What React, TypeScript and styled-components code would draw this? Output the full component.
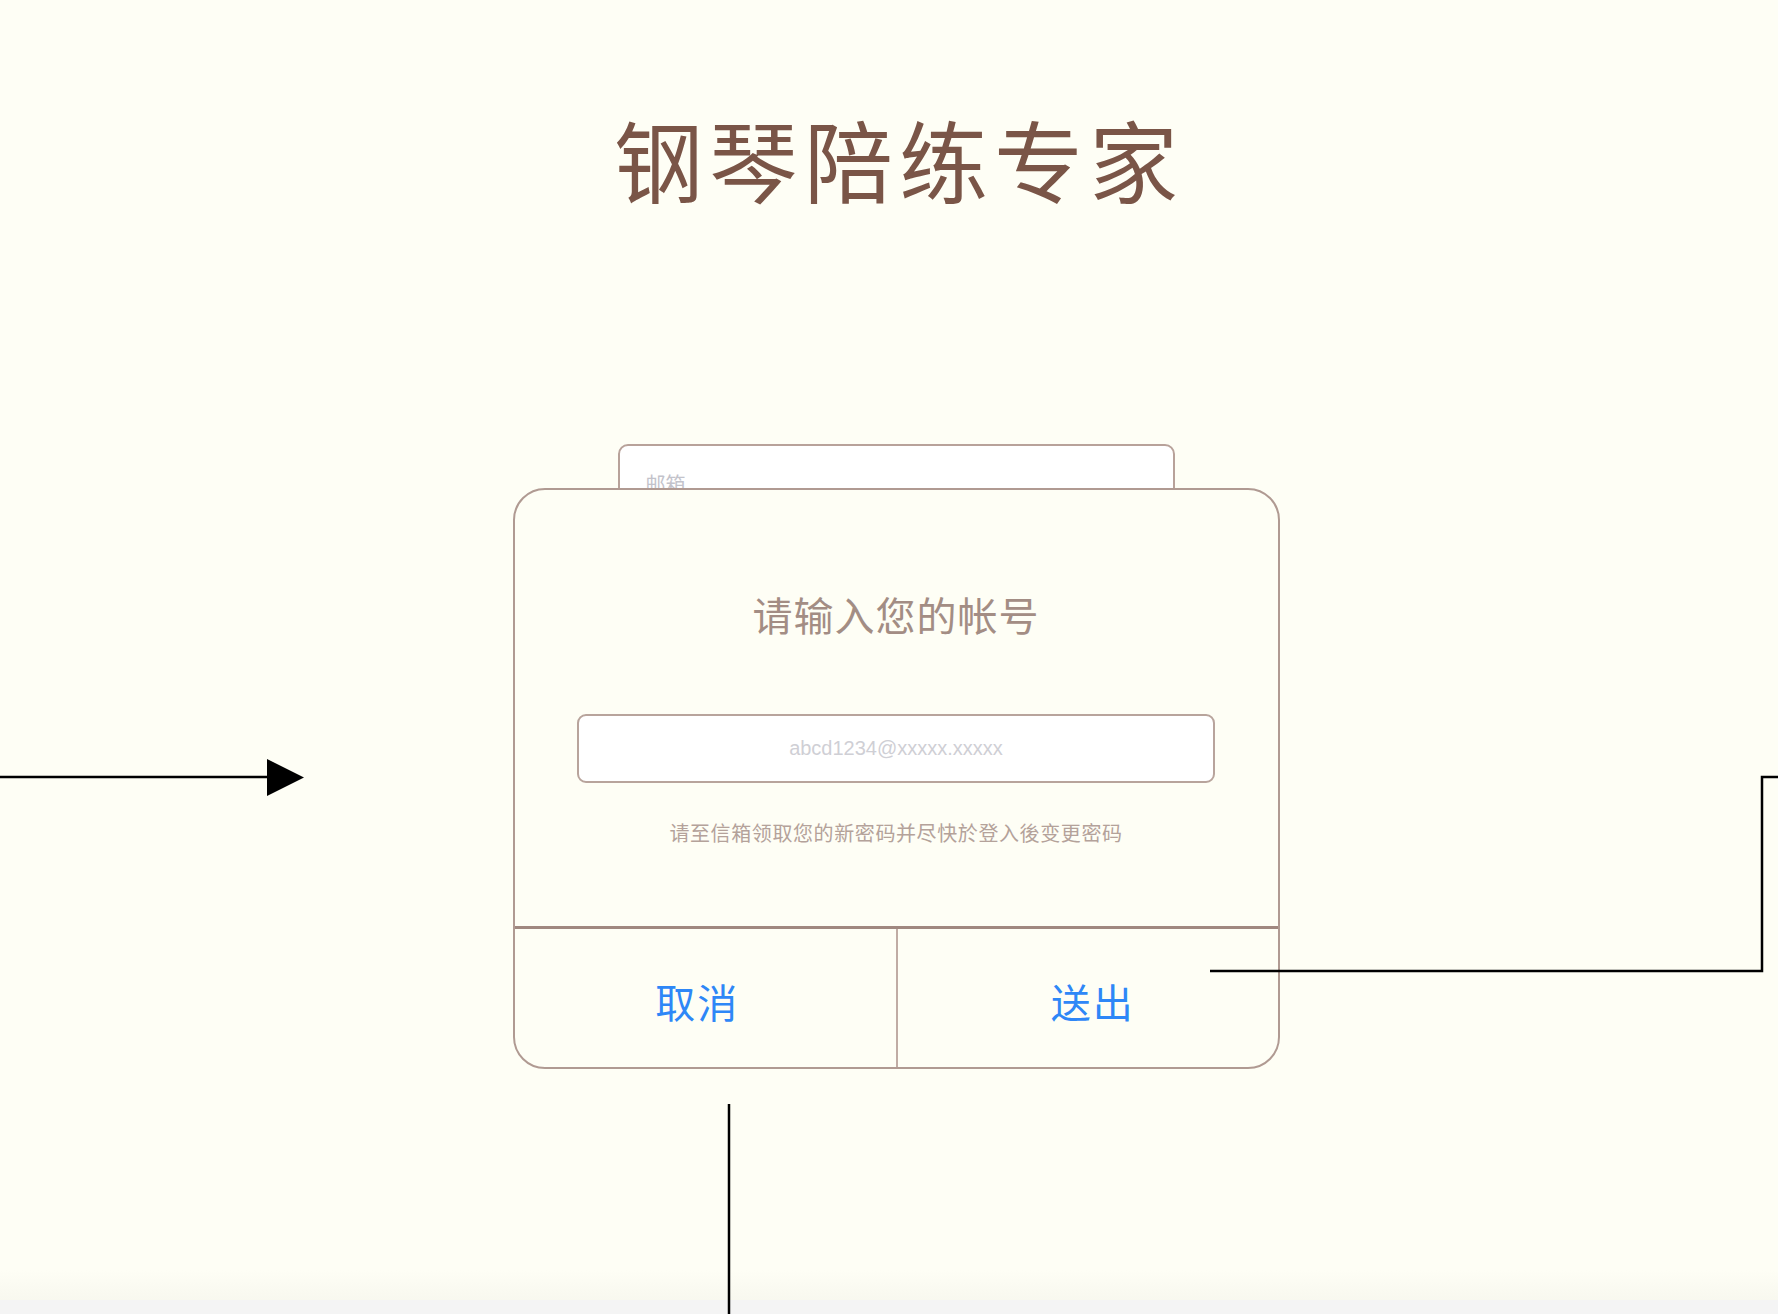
import React from "react";
import styled, { createGlobalStyle } from "styled-components";

const GlobalStyle = createGlobalStyle`
  html, body {
    margin: 0;
    padding: 0;
    background: #fefef5;
  }
  * { box-sizing: border-box; }
  body {
    font-family: "Noto Sans CJK SC", "Noto Sans", sans-serif;
  }
`;

const Page = styled.div`
  position: relative;
  min-height: 1314px;
  width: 1778px;
  display: flex;
  flex-direction: column;
  align-items: center;
  padding-left: 14px;
  overflow: hidden;
  background: #fefef5;
`;

const Title = styled.h1`
  margin: 113px 0 0;
  padding-left: 6px;
  font-size: 89px;
  line-height: 1;
  font-weight: 400;
  letter-spacing: 6px;
  color: #7a5547;
  font-family: "Noto Sans CJK SC", sans-serif;
`;

const FormStack = styled.div`
  margin-top: 242px;
  width: 767px;
  display: flex;
  flex-direction: column;
  align-items: center;
`;

const BackField = styled.div`
  width: 557px;
  height: 62px;
  margin-bottom: -18px;
  background: #ffffff;
  border: 2px solid #b8a29a;
  border-radius: 10px;
  padding: 26px 0 0 26px;
  font-size: 20px;
  line-height: 24px;
  color: #c3c3cb;
  font-family: "Noto Sans CJK SC", sans-serif;
`;

const Modal = styled.div`
  position: relative;
  z-index: 1;
  width: 767px;
  height: 581px;
  background: #fefef5;
  border: 2.5px solid #b09a92;
  border-radius: 32px;
  display: flex;
  flex-direction: column;
  overflow: hidden;
`;

const Body = styled.div`
  height: 436px;
  display: flex;
  flex-direction: column;
  align-items: center;
  padding-top: 100px;
`;

const ModalTitle = styled.h2`
  margin: 0;
  font-size: 40px;
  line-height: 48px;
  font-weight: 400;
  letter-spacing: 1px;
  color: #a38d84;
  font-family: "Noto Sans CJK SC", sans-serif;
`;

const EmailInput = styled.input`
  margin-top: 76px;
  width: 638px;
  height: 69px;
  border: 2px solid #b8a49c;
  border-radius: 9px;
  background: #ffffff;
  text-align: center;
  font-size: 20px;
  font-family: "Liberation Sans", Arial, sans-serif;
  color: #555;
  outline: none;
  &::placeholder {
    color: #cfcfd5;
  }
`;

const Hint = styled.p`
  margin: 38px 0 0;
  font-size: 20px;
  line-height: 24px;
  letter-spacing: 0.6px;
  color: #b4a29a;
  font-family: "Noto Sans CJK SC", sans-serif;
`;

const Actions = styled.div`
  flex: 1;
  display: grid;
  grid-template-columns: 1fr 1fr;
  border-top: 3px solid #a08880;
`;

const ActionButton = styled.button<{ $divider?: boolean }>`
  border: none;
  border-left: ${(p) => (p.$divider ? "2px solid #c0aca4" : "none")};
  background: transparent;
  color: #2e87f7;
  font-size: 40px;
  letter-spacing: 2px;
  font-family: "Noto Sans CJK SC", sans-serif;
  padding: 6px 0 0;
  cursor: pointer;
`;

const ActionLabel = styled.span<{ $shift: number }>`
  display: inline-block;
  margin-left: ${(p) => (p.$shift > 0 ? p.$shift : 0)}px;
  margin-right: ${(p) => (p.$shift < 0 ? -p.$shift : 0)}px;
`;

const Footer = styled.div`
  margin-top: auto;
  align-self: stretch;
  margin-left: -14px;
  height: 44px;
  background: linear-gradient(
    to bottom,
    #fefef5 0px,
    #f8f8ef 30px,
    #f4f4f4 30px,
    #f4f4f4 44px
  );
`;

const Annotations = styled.svg`
  position: absolute;
  top: 0;
  left: 0;
  width: 1778px;
  height: 1314px;
  pointer-events: none;
  z-index: 2;
`;

export default function App() {
  return (
    <>
      <GlobalStyle />
      <Page>
        <Title>钢琴陪练专家</Title>
        <FormStack>
          <BackField>邮箱</BackField>
          <Modal>
            <Body>
              <ModalTitle>请输入您的帐号</ModalTitle>
              <EmailInput placeholder="abcd1234@xxxxx.xxxxx" />
              <Hint>请至信箱领取您的新密码并尽快於登入後变更密码</Hint>
            </Body>
            <Actions>
              <ActionButton>
                <ActionLabel $shift={-16}>取消</ActionLabel>
              </ActionButton>
              <ActionButton $divider>
                <ActionLabel $shift={10}>送出</ActionLabel>
              </ActionButton>
            </Actions>
          </Modal>
        </FormStack>
        <Footer />
        <Annotations viewBox="0 0 1778 1314">
          <line x1="0" y1="777" x2="268" y2="777" stroke="#000" strokeWidth="2.5" />
          <polygon points="267,759 304,777.5 267,796" fill="#000" />
          <polyline
            points="1210,971 1762,971 1762,777 1778,777"
            fill="none"
            stroke="#000"
            strokeWidth="2.5"
          />
          <line x1="729" y1="1104" x2="729" y2="1314" stroke="#000" strokeWidth="2.5" />
        </Annotations>
      </Page>
    </>
  );
}
